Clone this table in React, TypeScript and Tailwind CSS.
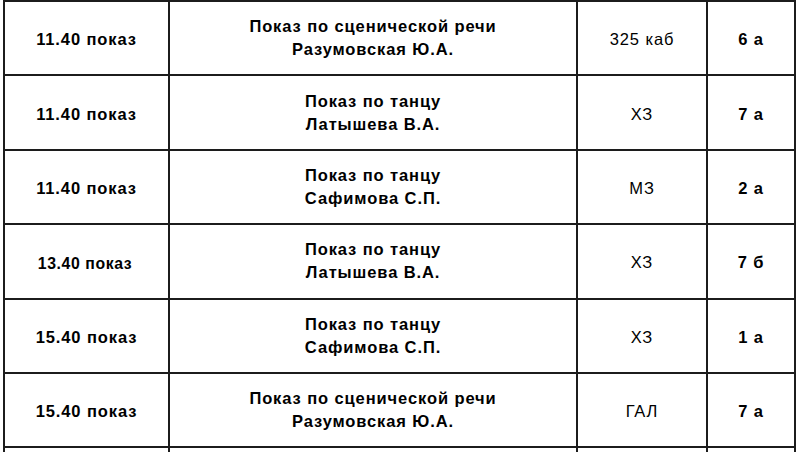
const rows = [
  { time: '11.40 показ', title: 'Показ по сценической речи', teacher: 'Разумовская Ю.А.', room: '325 каб', group: '6 а' },
  { time: '11.40 показ', title: 'Показ по танцу', teacher: 'Латышева В.А.', room: 'ХЗ', group: '7 а' },
  { time: '11.40 показ', title: 'Показ по танцу', teacher: 'Сафимова С.П.', room: 'МЗ', group: '2 а' },
  { time: '13.40 показ', title: 'Показ по танцу', teacher: 'Латышева В.А.', room: 'ХЗ', group: '7 б' },
  { time: '15.40 показ', title: 'Показ по танцу', teacher: 'Сафимова С.П.', room: 'ХЗ', group: '1 а' },
  { time: '15.40 показ', title: 'Показ по сценической речи', teacher: 'Разумовская Ю.А.', room: 'ГАЛ', group: '7 а' },
  { time: '', title: '', teacher: '', room: '', group: '' },
]

export default function App() {
  return (
    <div className="w-[800px] h-[452px] overflow-hidden bg-white text-black font-['Liberation_Sans',Arial,sans-serif] text-[16.5px] tracking-[0.9px]">
      <div className="ml-[3px] w-[793px] border-l-2 border-t-2 border-[#1c1c1c]">
        {rows.map((r, i) => (
          <div key={i} className="flex h-[74.4px] border-b-2 border-[#1c1c1c]">
            <div className={`w-[165px] shrink-0 border-r-2 border-[#1c1c1c] flex items-center justify-center font-bold ${i === 3 ? 'pt-[5px] pr-[3px] text-[15.8px] tracking-[0.6px]' : 'pt-[3px]'}`}>
              {r.time}
            </div>
            <div className="w-[408px] shrink-0 border-r-2 border-[#1c1c1c] flex flex-col items-center justify-center leading-[23px] font-bold">
              <span>{r.title}</span>
              <span>{r.teacher}</span>
            </div>
            <div className="w-[130px] shrink-0 border-r-2 border-[#1c1c1c] flex items-center justify-center pt-[3px]">
              {r.room}
            </div>
            <div className="w-[88px] shrink-0 border-r-2 border-[#1c1c1c] flex items-center justify-center pt-[3px] font-bold">
              {r.group}
            </div>
          </div>
        ))}
      </div>
    </div>
  )
}
